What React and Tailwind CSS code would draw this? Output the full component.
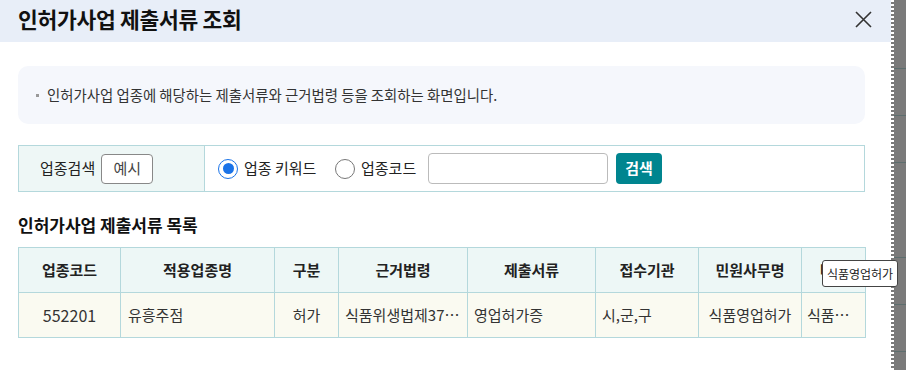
import React from "react";

const font = { fontFamily: '"Noto Sans CJK KR", "Noto Sans", sans-serif' };

function Radio({ checked }) {
  return checked ? (
    <span className="shrink-0 w-[20px] h-[20px] rounded-full border-[1.5px] border-[#1a73e8] flex items-center justify-center bg-white">
      <span className="w-[11px] h-[11px] rounded-full bg-[#1a73e8]" />
    </span>
  ) : (
    <span className="shrink-0 w-[20px] h-[20px] rounded-full border border-[#777] bg-white" />
  );
}

const cols = [102, 154, 64, 129, 128, 103, 103, 64];
const heads = ["업종코드", "적용업종명", "구분", "근거법령", "제출서류", "접수기관", "민원사무명", "비고"];

export default function App() {
  return (
    <div className="w-[906px] h-[370px] flex overflow-hidden bg-white text-[#222]" style={font}>
      <div className="w-[891px] shrink-0 flex flex-col bg-white relative">
        <div className="h-[42px] bg-[#e8eef8] flex items-center justify-between pl-[18px] pr-[19px]">
          <h1 className="text-[21.5px] font-bold text-[#111] leading-[30px] mt-[-4px] tracking-[-0.3px]">인허가사업 제출서류 조회</h1>
          <svg width="17" height="17" viewBox="0 0 17 17" className="mt-[-4px]">
            <path d="M1 1L16 16M16 1L1 16" stroke="#333" strokeWidth="1.6" fill="none" />
          </svg>
        </div>
        <div className="pl-[18px] pr-[26px]">
          <div className="mt-[24px] h-[58px] rounded-[10px] bg-[#f5f7fc] flex items-center pl-[18px] text-[14.4px] text-[#333]">
            <span className="w-[3px] h-[3px] bg-[#999] mr-[8px]" />
            인허가사업 업종에 해당하는 제출서류와 근거법령 등을 조회하는 화면입니다.
          </div>
          <div className="mt-[21px] h-[47px] border border-[#b4d8dc] flex">
            <div className="w-[186px] shrink-0 bg-[#eef7f6] border-r border-[#b4d8dc] flex items-center pl-[21px] gap-[6px]">
              <span className="text-[15px] text-[#222] whitespace-nowrap">업종검색</span>
              <button className="h-[30px] w-[52px] border border-[#888] rounded-[4px] bg-white text-[15px] text-[#444]">예시</button>
            </div>
            <div className="flex items-center pl-[13px] text-[15px] text-[#222] whitespace-nowrap">
              <Radio checked />
              <span className="ml-[6px] w-[91px]">업종 키워드</span>
              <Radio />
              <span className="ml-[6px] w-[58px]">업종코드</span>
              <div className="ml-[9px] w-[180px] h-[31px] border border-[#bbb] rounded-[4px] bg-white" />
              <button className="ml-[8px] w-[46px] h-[31px] rounded-[4px] bg-[#00858f] text-white font-bold text-[15px]">검색</button>
            </div>
          </div>
          <h2 className="mt-[21px] text-[17px] font-bold text-[#111] leading-[24px]">인허가사업 제출서류 목록</h2>
          <div className="relative mt-[10px]">
            <table className="border-collapse table-fixed w-[847px] text-[15px]">
              <colgroup>
                {cols.map((w, i) => (
                  <col key={i} style={{ width: w }} />
                ))}
              </colgroup>
              <thead>
                <tr className="h-[45px] bg-[#edf7f6]">
                  {heads.map((h) => (
                    <th key={h} className="border border-[#b4d8dc] font-bold text-[#222] text-center whitespace-nowrap">{h}</th>
                  ))}
                </tr>
              </thead>
              <tbody>
                <tr className="h-[45px] bg-[#fafaf1] text-[#333]">
                  <td className="border border-[#b4d8dc] text-center text-[16px]">552201</td>
                  <td className="border border-[#b4d8dc] px-[7px]">유흥주점</td>
                  <td className="border border-[#b4d8dc] text-center">허가</td>
                  <td className="border border-[#b4d8dc] px-[6px] whitespace-nowrap overflow-hidden text-ellipsis">식품위생법제37조제1항</td>
                  <td className="border border-[#b4d8dc] px-[6px]">영업허가증</td>
                  <td className="border border-[#b4d8dc] px-[6px]">시,군,구</td>
                  <td className="border border-[#b4d8dc] text-center whitespace-nowrap">식품영업허가</td>
                  <td className="border border-[#b4d8dc] px-[5px] whitespace-nowrap overflow-hidden text-ellipsis">식품영업허가</td>
                </tr>
              </tbody>
            </table>
            <div className="absolute left-[804px] top-[13px] w-[76px] h-[27px] bg-white border border-[#444] rounded-[3px] flex items-center justify-center text-[12px] text-[#222] z-10 whitespace-nowrap">
              식품영업허가
            </div>
          </div>
        </div>
      </div>
      <div className="flex-1 flex bg-[#7a7a7a]">
        <div className="w-[3px] h-full bg-[repeating-linear-gradient(to_bottom,#ffffff_0px,#ffffff_2px,#7a7a7a_2px,#7a7a7a_4px)]" />
        <div className="flex-1 flex flex-col">
          <div className="h-[69px] border-b border-[#5d6e6e]" />
          <div className="h-[47px] border-b border-[#5d6e6e]" />
          <div className="h-[47px] border-b border-[#5d6e6e]" />
          <div className="h-[95px] border-b border-[#5d6e6e]" />
          <div className="h-[47px] border-b border-[#5d6e6e]" />
          <div className="h-[47px] border-b border-[#5d6e6e]" />
        </div>
      </div>
    </div>
  );
}
